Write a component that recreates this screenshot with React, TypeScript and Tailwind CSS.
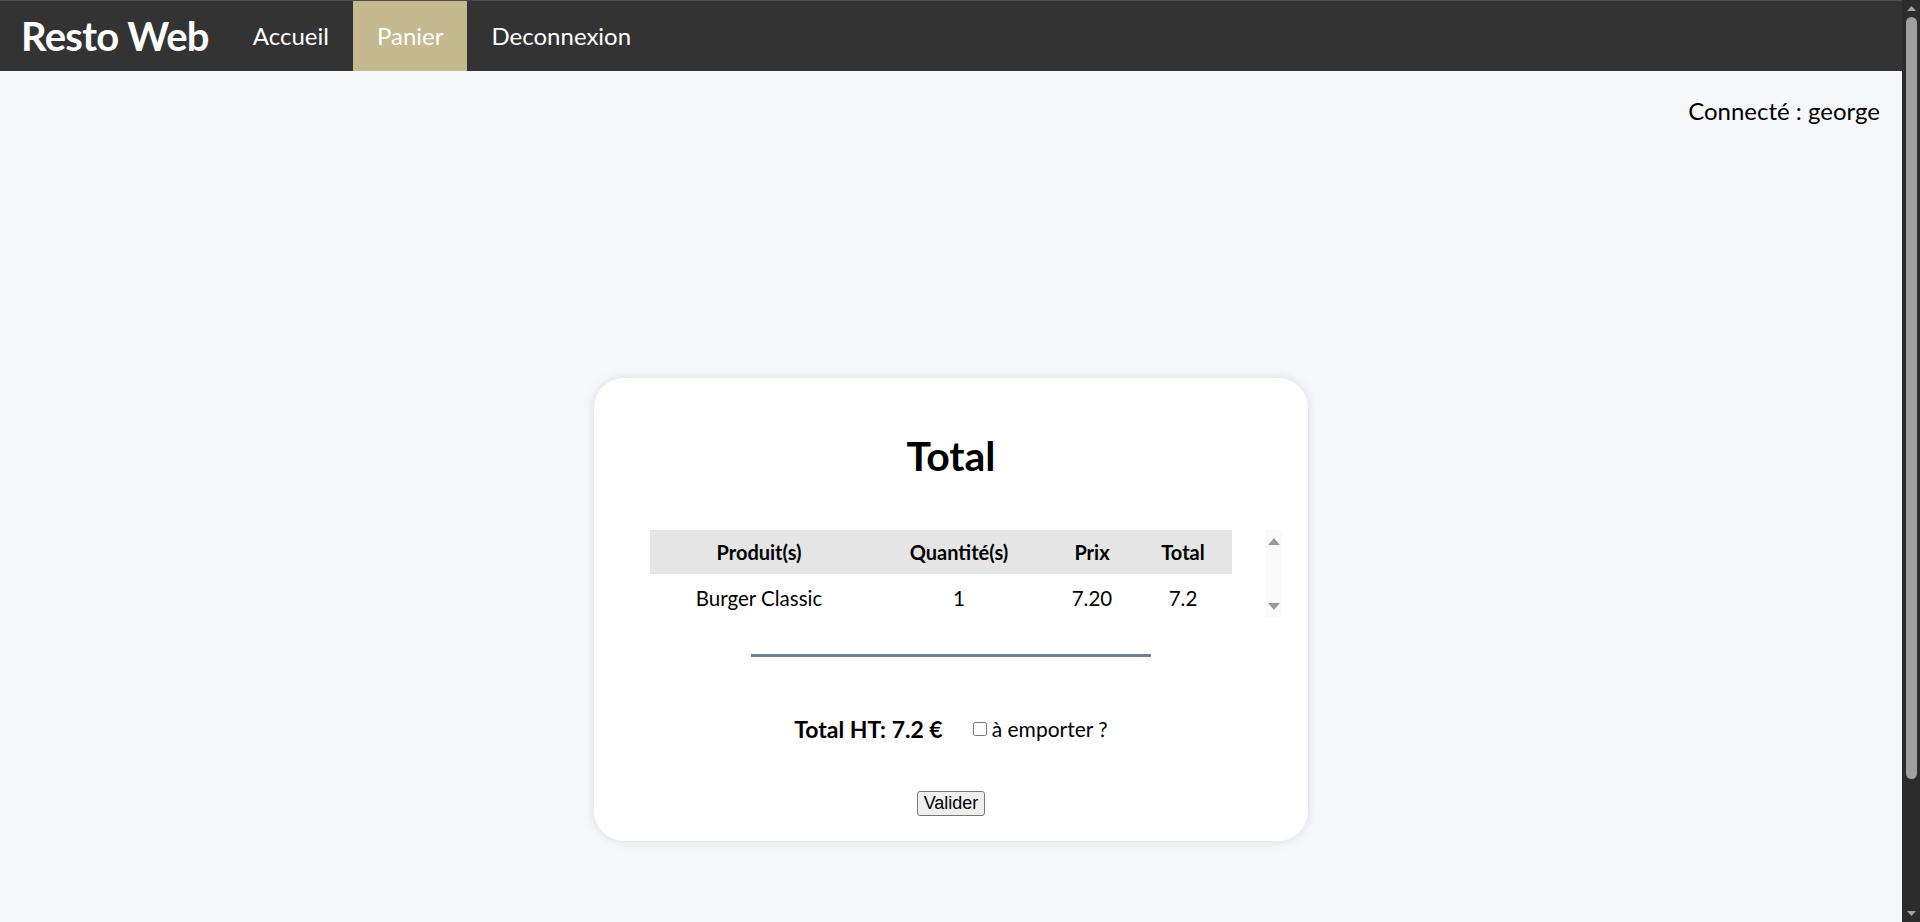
import React from "react";

const font = "font-['Lato','Noto_Sans',sans-serif]";

const Arrow: React.FC<{ up?: boolean; w?: number; h?: number }> = ({ up, w = 9, h = 5 }) => (
  <svg width={w} height={h} viewBox={`0 0 ${w} ${h}`}>
    <polygon
      points={up ? `0,${h} ${w / 2},0 ${w},${h}` : `0,0 ${w},0 ${w / 2},${h}`}
      fill="currentColor"
    />
  </svg>
);

const NavBar: React.FC = () => {
  return (
    <nav className="w-full h-[71px] flex items-stretch bg-[#333333] border-t border-[#4d4d4d] pl-[21px]">
      <a className="flex items-center text-[40px] font-bold text-white tracking-[-0.7px] mr-[20px]">
        Resto Web
      </a>
      <a className="flex items-center px-6 text-[24px] text-white">Accueil</a>
      <a className="flex items-center px-6 text-[24px] text-white bg-[#c4b98f]">
        Panier
      </a>
      <a className="flex items-center px-6 text-[24px] text-white">
        Deconnexion
      </a>
    </nav>
  );
};

const Cart: React.FC = () => {
  return (
    <div className="mx-auto mt-[252px] w-[714px] bg-white rounded-[30px] shadow-[0_0_12px_rgba(0,0,0,0.12)] pt-[55px] pb-[25px] flex flex-col items-center">
      <h1 className="text-[41px] leading-[46px] font-bold text-black">Total</h1>

      <div className="self-start ml-[56px] mt-[51px] w-[632px] h-[88px] flex">
        <table className="w-[582px] h-[88px] border-collapse text-black">
          <thead>
            <tr className="bg-[#e5e5e5] h-[44px]">
              <th className="w-[218px] text-[20px] font-bold">Produit(s)</th>
              <th className="w-[182px] text-[20px] font-bold">Quantité(s)</th>
              <th className="w-[84px] text-[20px] font-bold">Prix</th>
              <th className="w-[98px] text-[20px] font-bold">Total</th>
            </tr>
          </thead>
          <tbody>
            <tr className="h-[44px] text-[20.5px] text-center">
              <td className="pt-[4px]">Burger Classic</td>
              <td className="pt-[4px]">1</td>
              <td className="pt-[4px]">7.20</td>
              <td className="pt-[4px]">7.2</td>
            </tr>
          </tbody>
        </table>
        <div className="ml-[33px] w-[17px] h-[88px] bg-[#fafafa] flex flex-col items-center justify-between py-[8px] text-[#999999]">
          <Arrow up w={12} h={7} />
          <Arrow w={12} h={7} />
        </div>
      </div>

      <hr className="mt-[36px] w-[400px] border-0 h-[3px] bg-[#708090]" />

      <div className="mt-[57px] h-[30px] flex items-center">
        <p className="text-[23px] font-bold text-black">Total HT: 7.2 €</p>
        <label className="ml-[30px] flex items-center text-[21px] text-black">
          <input type="checkbox" className="w-[14px] h-[14px] mr-[5px]" />
          à emporter ?
        </label>
      </div>

      <button
        type="submit"
        className="mt-[47px] px-[6px] py-[1px] bg-[#efefef] border border-[#767676] rounded-[3px] text-[18px] leading-[21px] text-black font-['Liberation_Sans',Arial,sans-serif]"
      >
        Valider
      </button>
    </div>
  );
};

const PageScrollbar: React.FC = () => {
  return (
    <div className="w-[18px] h-full bg-[#2c2c2c] flex flex-col items-center text-[#a3a3a3]">
      <div className="h-[17px] flex items-center justify-center">
        <Arrow up />
      </div>
      <div className="w-[11px] h-[762px] rounded-full bg-[#9f9f9f]" />
      <div className="flex-1" />
      <div className="h-[17px] flex items-center justify-center">
        <Arrow />
      </div>
    </div>
  );
};

const App: React.FC = () => {
  return (
    <div className={`h-screen flex overflow-hidden bg-[#f7f8fc] ${font}`}>
      <div className="flex-1 h-full overflow-hidden">
        <NavBar />
        <p className="text-right pr-[22px] mt-[25px] text-[24px] leading-[30px] text-black">
          Connecté : george
        </p>
        <Cart />
      </div>
      <PageScrollbar />
    </div>
  );
};

export default App;
